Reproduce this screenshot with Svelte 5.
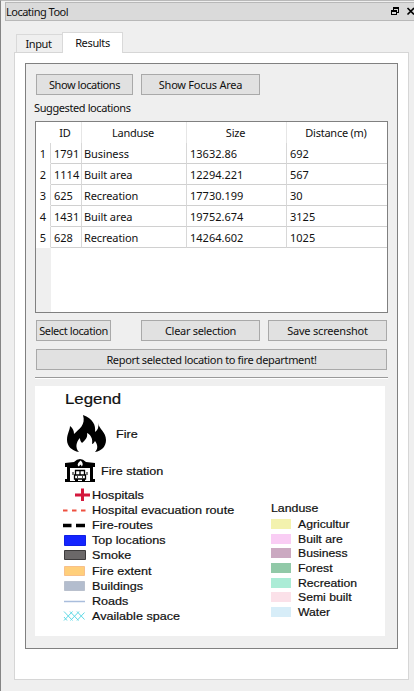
<script>
  const rows = [
    ['1', '1791', 'Business', '13632.86', '692'],
    ['2', '1114', 'Built area', '12294.221', '567'],
    ['3', '625', 'Recreation', '17730.199', '30'],
    ['4', '1431', 'Built area', '19752.674', '3125'],
    ['5', '628', 'Recreation', '14264.602', '1025']
  ];
  const symbols = [
    ['cross', 'Hospitals'],
    ['evac', 'Hospital evacuation route'],
    ['route', 'Fire-routes'],
    ['top', 'Top locations'],
    ['smoke', 'Smoke'],
    ['extent', 'Fire extent'],
    ['building', 'Buildings'],
    ['road', 'Roads'],
    ['space', 'Available space']
  ];
  const landuse = [
    ['#f3f2ae', 'Agricultur'],
    ['#f9cdf4', 'Built are'],
    ['#cba9c1', 'Business'],
    ['#91c9a8', 'Forest'],
    ['#abecd6', 'Recreation'],
    ['#fbe1e9', 'Semi built'],
    ['#d7edf8', 'Water']
  ];
</script>

<div class="window">
  <header>
    <span class="title">Locating Tool</span>
    <svg class="controls" width="26" height="12" viewBox="0 0 26 12">
      <path d="M4 1h6v6H8V6h1V3H5v1H4zM2 4h6v5H2zM3 6v2h4V6z" fill="#000" fill-rule="evenodd" shape-rendering="crispEdges" />
      <path d="M18.500 2L25 8.500M25 2L18.500 8.500" stroke="#000" stroke-width="1.600" />
    </svg>
  </header>

  <nav>
    <div class="tab input"><span>Input</span></div>
    <div class="tab active"><span>Results</span></div>
  </nav>

  <main>
    <section class="frame">
      <div class="buttons">
        <button class="w97 b1">Show locations</button>
        <button class="w119 gap8 b2">Show Focus Area</button>
      </div>
      <div class="label">Suggested locations</div>

      <div class="table">
        <div class="row head">
          <span class="num"></span><span>ID</span><span>Landuse</span><span>Size</span><span>Distance (m)</span>
        </div>
        {#each rows as row}
          <div class="row">
            {#each row as cell, i}<span class:num={i === 0}>{cell}</span>{/each}
          </div>
        {/each}
        <div class="rest"></div>
      </div>

      <div class="buttons second">
        <button class="w75 b3">Select location</button>
        <button class="w119 gap30 b4">Clear selection</button>
        <button class="w119 gap8 b5">Save screenshot</button>
      </div>
      <div class="buttons third">
        <button class="w351">Report selected location to fire department!</button>
      </div>
      <hr />

      <div class="legend">
        <div class="left">
          <h2>Legend</h2>
          <div class="fire">
            <svg width="41" height="38" viewBox="0 0 41 38">
              <path d="M17 0C27 4 30 10 29 17C32 15 33 12 32 8C33 14 40 17 40 25C40 31 36 36 29 37C32 34 32 30 29 26C28 28 27 29 26 29C27 24 25 20 21 18C22 23 19 25 16 28C14 26 14 24 14 23C10 27 9 33 13 37C6 36 1 31 1 25C1 19 4 15 4 11C7 13 8 16 8 19C13 14 20 10 17 0Z" />
            </svg>
            <span class="map">Fire</span>
          </div>
          <div class="station">
            <svg width="30" height="24" viewBox="0 0 30 24">
              <path d="M0 4L9 3Q15-3 21 3L30 4V8H28V20H30V23H0V20H2V8H0Z" />
              <path d="M5 9H25V22H5Z" fill="#fff" />
              <path d="M15.500 1.500C18 3.500 18.500 6 16.500 7.500C16.500 6.500 16 6 15 5.500C14.800 6.500 14.300 7 14 7.500C11.500 6 13 4 15.500 1.500Z" fill="#fff" />
              <path d="M10.500 11.500H19.500V16H10.500ZM15 11.500V16M9.500 16H20.500V20H9.500ZM12 18H13M17 18H18" fill="none" stroke="#000" stroke-width="1.300" />
              <path d="M10 20h3v2h-3zM17 20h3v2h-3z" />
              <path d="M8 13v3M22 13v3" stroke="#000" stroke-width="1" />
            </svg>
            <span class="map">Fire station</span>
          </div>
          {#each symbols as [kind, name]}
            <div class="item">
              <svg width="30" height="14" viewBox="0 0 30 14">
                {#if kind === 'cross'}
                  <path d="M12 7H27M19.500 .5V13" stroke="#d4193d" stroke-width="3" />
                {:else if kind === 'evac'}
                  <path d="M0 7.500H24" stroke="#ee5140" stroke-width="2" stroke-dasharray="4.500 4.500" />
                {:else if kind === 'route'}
                  <path d="M-1 7.500H8.500M13 7.500H22" stroke="#000" stroke-width="3.500" />
                {:else if kind === 'top'}
                  <path d="M1.500 2.500H22.500V12.500H1.500Z" fill="#1424ff" stroke="#1020e4" />
                {:else if kind === 'smoke'}
                  <path d="M1.500 2.500H22.500V11.500H1.500Z" fill="#6b6869" stroke="#3d3b3c" />
                {:else if kind === 'extent'}
                  <path d="M1.500 2.500H21.500V11.500H1.500Z" fill="#ffcf7b" stroke="#f8c08a" />
                {:else if kind === 'building'}
                  <path d="M1.500 2.500H21.500V11.500H1.500Z" fill="#b3bdce" stroke="#b9c0cd" />
                {:else if kind === 'road'}
                  <path d="M1 7.500H22" stroke="#a9bddc" stroke-width="1.500" />
                {:else}
                  <path d="M1 2.500L9.500 11.500M7 2.500L15.500 11.500M14 2.500L21.500 10.500M9.500 2.500L1 11.500M16 2.500L7.500 11.500M21.500 3.500L14 11.500M1 8L4 11.500" fill="none" stroke="#5fd9e6" stroke-width="1" />
                {/if}
              </svg>
              <span class="map">{name}</span>
            </div>
          {/each}
        </div>
        <div class="right">
          <h3>Landuse</h3>
          {#each landuse as [color, name]}
            <div class="use">
              <i style="background:{color}"></i>
              <span class="map">{name}</span>
            </div>
          {/each}
        </div>
      </div>
    </section>
  </main>
</div>

<style>
  :global(body) { background: #efefef; }
  .window, .window * { box-sizing: border-box; }
  .window {
    width: 414px; height: 691px; overflow: hidden;
    border-left: 1px solid #858585; border-top: 1px solid #b9b9b9;
    padding: 1px 0 0 4px; background: #efefef; color: #111;
    font: 11px/14px "Noto Sans", sans-serif; letter-spacing: -.35px;
    white-space: nowrap;
  }
  header {
    display: flex; justify-content: space-between; align-items: center;
    height: 19px; background: #dadada; border: 1px solid #b8b8b8; border-right: 0;
  }
  .title { letter-spacing: -.5px; }
  .controls { margin-right: -1px; flex: none; }
  nav { display: flex; align-items: flex-end; height: 31px; padding-left: 11px; }
  .tab { display: flex; justify-content: center; align-items: center; border: 1px solid #d9d9d9; border-bottom: 0; }
  .tab.input { width: 46px; height: 18px; border-right: 0; letter-spacing: -.4px; padding: 1px 2px 0 0; }
  .tab.active { width: 61px; height: 21px; background: #fff; margin-bottom: -1px; z-index: 1; }
  main { width: 395px; height: 628px; margin-left: 9px; background: #fff; border: 1px solid #d6d6d6; padding: 10px; }
  .frame { width: 373px; height: 586px; background: #efefef; border: 1px solid #808080; padding: 10px 9px 0; }
  .buttons { display: flex; padding-left: 1px; }
  button {
    display: flex; justify-content: center; align-items: center; height: 21px; padding: 1px 0 0;
    background: #e1e1e1; border: 1px solid #a9a9a9; color: #111; font: inherit; letter-spacing: inherit;
  }
  .w97 { width: 97px; } .w119 { width: 119px; } .w75 { width: 75px; } .w351 { width: 351px; }
  .gap30 { margin-left: 30px; } .gap8 { margin-left: 8px; }
  .b1 { letter-spacing: -.45px; } .b2 { letter-spacing: -.25px; } .b3 { letter-spacing: -.4px; }
  .b4 { letter-spacing: -.3px; } .b5 { letter-spacing: -.2px; }
  .label { height: 26px; padding: 6px 0 0; margin-left: -1px; letter-spacing: -.4px; }
  .table { width: 353px; height: 192px; border: 1px solid #808080; background: #fff; display: flex; flex-direction: column; letter-spacing: 0; }
  .row { display: grid; grid-template-columns: 15px 31px 105px 100px 100px; height: 21px; }
  .row span { display: flex; align-items: center; padding: 2px 0 0 3px; border-right: 1px solid #d8d8d8; border-bottom: 1px solid #d0d0d0; }
  .row span:nth-child(3) { padding-left: 2px; letter-spacing: -.1px; }
  .row span:last-child { border-right: 0; }
  .row span.num { justify-content: center; padding: 2px 0 0; border-bottom-color: #fff; }
  .row.head span { justify-content: center; padding: 1px 2px 0 0; border-bottom: 0; border-right-color: #e6e6e6; letter-spacing: -.25px; }
  .row.head span.num { border-right-color: #fff; }
  .rest { flex: 1; width: 15px; background: #efefef; }
  .second { margin-top: 7px; }
  .third { margin-top: 8px; }
  hr { height: 2px; margin: 7px 0 8px; border: 0; border-top: 1px solid #9a9a9a; border-bottom: 1px solid #fff; }
  .legend {
    width: 350px; height: 250px; margin-top: -1px; background: #fff; display: flex; padding: 4px 0 0 28px;
    font-family: "Liberation Sans", Arial, sans-serif; font-size: 11px; letter-spacing: 0;
    -webkit-text-stroke: .2px #111;
  }
  .left { width: 208px; }
  .map { display: inline-block; transform: scaleX(1.145); transform-origin: left; }
  h2 { margin: 0 0 6px 2px; font-size: 14.5px; line-height: 18px; font-weight: 400; transform: scaleX(1.16); transform-origin: left; }
  .fire { display: flex; align-items: center; height: 40px; padding-left: 3px; gap: 9px; }
  .station { display: flex; align-items: center; height: 33px; padding-left: 2px; gap: 6px; }
  .item { display: flex; align-items: center; height: 15.200px; }
  .item svg, .fire svg, .station svg { flex: none; }
  .item .map { margin-left: -1px; }
  h3 { margin: 0 0 2px; font-size: 11px; line-height: 14px; font-weight: 400; transform: scaleX(1.12); transform-origin: left; }
  .right { padding-top: 111px; }
  .right .map { transform: scaleX(1.11); }
  .use { display: flex; align-items: center; height: 14.600px; gap: 7px; }
  .use i { width: 20px; height: 10px; }
</style>
